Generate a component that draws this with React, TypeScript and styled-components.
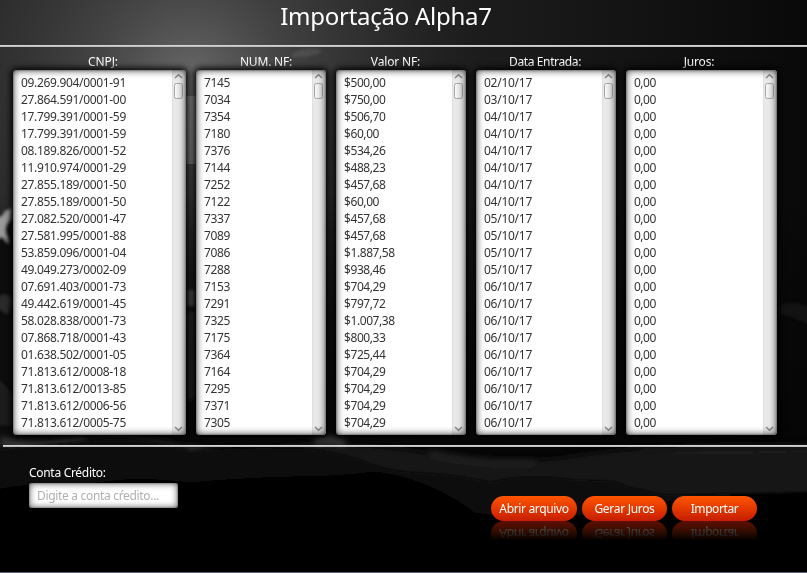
import React from "react";
import styled, { createGlobalStyle, css } from "styled-components";

const GlobalStyle = createGlobalStyle`
  * { box-sizing: border-box; }
  body { margin: 0; background: #000; overflow: hidden; }
`;

const Window = styled.main`
  position: relative;
  width: 807px;
  height: 573px;
  overflow: hidden;
  display: flex;
  flex-direction: column;
  border-bottom: 1px solid #56627a;
  font: 12px/17px "Noto Sans", "Open Sans", sans-serif;
  color: #fff;
  isolation: isolate;
`;

const Scenery = styled.svg`
  position: absolute;
  inset: 0;
  z-index: -1;
`;

const Title = styled.h1`
  margin: 0;
  height: 45px;
  padding-right: 35px;
  font-size: 24px;
  font-weight: 400;
  line-height: 31px;
  letter-spacing: -0.26px;
  text-align: center;
`;

const Rule = styled.hr<{ $inset?: number }>`
  flex: none;
  height: 2px;
  width: auto;
  margin: 0 0 0 ${(p) => p.$inset ?? 0}px;
  border: 0;
  background: linear-gradient(#d4d4d4 50%, #bcbcbc 50%);
`;

const Columns = styled.section`
  display: flex;
  gap: 10px;
  height: 398px;
  padding: 7px 0 0 13px;
`;

const Column = styled.div<{ $width: number }>`
  width: ${(p) => p.$width}px;
`;

const ColumnLabel = styled.div<{ $shift: number; $spacing: number }>`
  height: 16px;
  line-height: 16px;
  text-align: center;
  text-indent: ${(p) => p.$shift * 2}px;
  letter-spacing: ${(p) => p.$spacing}px;
  white-space: nowrap;
`;

const fieldShade = css`
  content: "";
  position: absolute;
  inset: 0;
  border-radius: 4px;
  pointer-events: none;
`;

const ListBox = styled.div`
  position: relative;
  display: flex;
  justify-content: space-between;
  height: 365px;
  border-radius: 4px;
  background: #fff;
  color: #333;
  box-shadow: 0 0 6px 2px #000;
  &::after {
    ${fieldShade}
    box-shadow: inset 0 0 2px #333, inset 0 0 7px 1px rgba(0, 0, 0, 0.62);
  }
`;

const Rows = styled.ul<{ $spacing: number }>`
  margin: 0;
  padding: 4px 0 0 8px;
  list-style: none;
  letter-spacing: ${(p) => p.$spacing}px;
  white-space: nowrap;
`;

const ScrollTrack = styled.div`
  display: flex;
  flex-direction: column;
  align-items: center;
  width: 14px;
  padding: 3px 2px 3px 0;
  border-radius: 0 4px 4px 0;
  background: #e9e9e9;
  border-left: 1px solid #e0e0e0;
`;

const Thumb = styled.div`
  width: 9px;
  height: 16px;
  margin: 3px 0 auto;
  border: 1px solid #a5a5a5;
  border-radius: 2.5px;
  background: linear-gradient(90deg, #fafafa, #dadada);
`;

const Arrow = styled.svg<{ $down?: boolean }>`
  display: block;
  flex: none;
  transform: ${(p) => (p.$down ? "scaleY(-1)" : "none")};
`;

const Footer = styled.footer`
  display: flex;
  justify-content: space-between;
  padding: 17px 50px 0 29px;
`;

const AccountLabel = styled.label`
  display: block;
  letter-spacing: -0.3px;
`;

const Field = styled.div`
  position: relative;
  width: 149px;
  height: 25px;
  margin-top: 2px;
  &::after {
    ${fieldShade}
    border-radius: 3px;
    box-shadow: inset 0 0 2px #444, inset 0 0 6px 1px rgba(0, 0, 0, 0.55);
  }
`;

const AccountInput = styled.input`
  display: block;
  width: 100%;
  height: 100%;
  padding: 0 8px;
  border: 0;
  border-radius: 3px;
  outline: none;
  background: #fff;
  font: inherit;
  letter-spacing: -0.32px;
  &::placeholder { color: #b0b0b0; opacity: 1; }
`;

const Actions = styled.div`
  display: flex;
  gap: 5px;
  padding-top: 32px;
`;

const ActionButton = styled.button<{ $width: number; $spacing: number }>`
  width: ${(p) => p.$width}px;
  height: 25px;
  padding: 0 0 1px;
  border: 0;
  border-radius: 13px;
  background: linear-gradient(#ff5500, #c61d00);
  color: #fff;
  font: inherit;
  letter-spacing: ${(p) => p.$spacing}px;
  white-space: nowrap;
  -webkit-box-reflect: below 0 linear-gradient(transparent 22%, rgba(0, 0, 0, 0.48));
`;

interface ColumnData {
  label: string;
  width: number;
  shift: number;
  spacing: number;
  rowSpacing: number;
  rows: string[];
}

const columns: ColumnData[] = [
  {
    label: "CNPJ:", width: 173, shift: 3.5, spacing: -0.1, rowSpacing: -0.33,
    rows: [
      "09.269.904/0001-91", "27.864.591/0001-00", "17.799.391/0001-59", "17.799.391/0001-59",
      "08.189.826/0001-52", "11.910.974/0001-29", "27.855.189/0001-50", "27.855.189/0001-50",
      "27.082.520/0001-47", "27.581.995/0001-88", "53.859.096/0001-04", "49.049.273/0002-09",
      "07.691.403/0001-73", "49.442.619/0001-45", "58.028.838/0001-73", "07.868.718/0001-43",
      "01.638.502/0001-05", "71.813.612/0008-18", "71.813.612/0013-85", "71.813.612/0006-56",
      "71.813.612/0005-75",
    ],
  },
  {
    label: "NUM. NF:", width: 130, shift: 5, spacing: -0.2, rowSpacing: -0.4,
    rows: [
      "7145", "7034", "7354", "7180", "7376", "7144", "7252", "7122", "7337", "7089", "7086",
      "7288", "7153", "7291", "7325", "7175", "7364", "7164", "7295", "7371", "7305",
    ],
  },
  {
    label: "Valor NF:", width: 130, shift: -5.5, spacing: -0.15, rowSpacing: -0.42,
    rows: [
      "$500,00", "$750,00", "$506,70", "$60,00", "$534,26", "$488,23", "$457,68", "$60,00",
      "$457,68", "$457,68", "$1.887,58", "$938,46", "$704,29", "$797,72", "$1.007,38",
      "$800,33", "$725,44", "$704,29", "$704,29", "$704,29", "$704,29",
    ],
  },
  {
    label: "Data Entrada:", width: 140, shift: -1, spacing: -0.38, rowSpacing: -0.26,
    rows: [
      "02/10/17", "03/10/17", ...Array(6).fill("04/10/17"), ...Array(4).fill("05/10/17"),
      ...Array(9).fill("06/10/17"),
    ],
  },
  {
    label: "Juros:", width: 151, shift: -2.5, spacing: -0.2, rowSpacing: -0.5,
    rows: Array(21).fill("0,00"),
  },
];

function Background() {
  return (
    <Scenery width="807" height="573" viewBox="0 0 807 573" aria-hidden="true">
      <defs>
        <linearGradient id="sky" x2="1">
          <stop offset="0" stopColor="#262626" />
          <stop offset=".45" stopColor="#232323" />
          <stop offset="1" stopColor="#090909" />
        </linearGradient>
        <radialGradient id="glow" gradientUnits="userSpaceOnUse" cx="190" cy="80" r="290">
          <stop offset="0" stopColor="#999" stopOpacity=".58" />
          <stop offset=".3" stopColor="#888" stopOpacity=".34" />
          <stop offset=".62" stopColor="#606060" stopOpacity=".2" />
          <stop offset="1" stopColor="#333" stopOpacity="0" />
        </radialGradient>
        <linearGradient id="dusk" x2="0" y2="1">
          <stop offset=".34" stopColor="#030303" stopOpacity="0" />
          <stop offset=".6" stopColor="#070707" stopOpacity=".78" />
          <stop offset="1" stopColor="#000" />
        </linearGradient>
        <filter id="soft" x="-20%" y="-100%" width="140%" height="300%">
          <feGaussianBlur stdDeviation="3" />
        </filter>
        <filter id="cloud" x="-100%" y="-30%" width="300%" height="160%">
          <feGaussianBlur stdDeviation="1.6" />
        </filter>
        <filter id="ridge" x="-5%" y="-10%" width="110%" height="120%">
          <feGaussianBlur stdDeviation="0.8" />
        </filter>
      </defs>
      <rect width="807" height="573" fill="url(#sky)" />
      <rect width="807" height="573" fill="url(#glow)" />
      <rect width="807" height="573" fill="url(#dusk)" />
      <rect x="180" y="96" width="22" height="68" fill="#bbb" opacity=".42" />
      <g filter="url(#cloud)">
        <path d="M-6 232 Q4 225 16 215 V440 H-6Z" fill="#080808" />
        <path d="M-4 218 L2 216 5 211 12 208 11 218 6 225 5 231 9 244 3 237 -4 238Z" fill="#999" />
        <path d="M-2 298 Q6 290 12 300 L8 315 -2 308Z" fill="#444" opacity=".6" />
        <path d="M-2 380 Q6 385 12 395 V425 H-2Z" fill="#333" opacity=".5" />
        <path d="M292 54 Q303 46 322 50 Q318 58 292 57Z" fill="#888" opacity=".22" />
        <path d="M187 290 H195 V306 H187Z" fill="#777" opacity=".5" />
        <path d="M187 312 H195 V400 H187Z" fill="#444" opacity=".4" />
        <path d="M780 305 Q792 300 812 308 V326 Q794 316 780 314Z" fill="#333" opacity=".3" />
      </g>
      <g filter="url(#soft)">
        <path d="M0 438 Q40 446 90 440 Q130 430 175 443 Q230 458 290 446 V462 H0Z" fill="#1b1b1b" />
        <path d="M0 440 Q35 449 85 440" fill="none" stroke="#4a4a4a" strokeWidth="4" />
        <path d="M188 448 Q230 460 258 454" fill="none" stroke="#383838" strokeWidth="4" />
        <path d="M315 441 Q330 437 345 443" fill="none" stroke="#484848" strokeWidth="5" />
        <path d="M280 446 Q345 440 420 452 Q510 468 580 455 Q690 440 830 446 V500 H480Z" fill="#151515" />
        <path d="M430 453 Q480 465 535 462" fill="none" stroke="#2b2b2b" strokeWidth="4" />
        <path d="M640 450 Q700 456 830 449" fill="none" stroke="#1e1e1e" strokeWidth="5" />
      </g>
      <g filter="url(#ridge)">
        <path d="M-10 450 Q70 442 115 438 Q150 440 190 451 Q240 465 290 468 V510 H-10Z" fill="#070707" />
        <path d="M190 451 Q260 446 310 449 Q335 452 358 459 Q385 471 410 472 Q455 474 490 482 Q530 473 575 480 Q620 479 625 486 L665 495 820 492 V573 H190Z" fill="#070707" />
        <path d="M-10 491 Q40 481 83 485 Q135 475 190 483 Q245 478 290 477 Q335 477 375 472 Q420 477 465 506 Q490 521 518 580 H-10Z" fill="#010101" />
        <path d="M460 510 Q540 528 620 508 Q710 495 820 491 V580 H480Z" fill="#020202" />
      </g>
    </Scenery>
  );
}

function ArrowIcon({ down }: { down?: boolean }) {
  return (
    <Arrow $down={down} width="9" height="7" viewBox="0 0 9 7" aria-hidden="true">
      <path d="M1 5 4.5 1.8 8 5" fill="none" stroke="#888" strokeWidth="1.5" />
    </Arrow>
  );
}

export default function App() {
  return (
    <>
      <GlobalStyle />
      <Window>
        <Background />
        <Title>Importação Alpha7</Title>
        <Rule />
        <Columns>
          {columns.map((c) => (
            <Column key={c.label} $width={c.width}>
              <ColumnLabel $shift={c.shift} $spacing={c.spacing}>{c.label}</ColumnLabel>
              <ListBox>
                <Rows $spacing={c.rowSpacing}>
                  {c.rows.map((row, i) => <li key={i}>{row}</li>)}
                </Rows>
                <ScrollTrack>
                  <ArrowIcon />
                  <Thumb />
                  <ArrowIcon down />
                </ScrollTrack>
              </ListBox>
            </Column>
          ))}
        </Columns>
        <Rule $inset={3} />
        <Footer>
          <div>
            <AccountLabel htmlFor="account">Conta Crédito:</AccountLabel>
            <Field>
              <AccountInput id="account" placeholder="Digite a conta cŕedito..." />
            </Field>
          </div>
          <Actions>
            <ActionButton $width={86} $spacing={-0.35}>Abrir arquivo</ActionButton>
            <ActionButton $width={85} $spacing={-0.3}>Gerar Juros</ActionButton>
            <ActionButton $width={85} $spacing={-0.4}>Importar</ActionButton>
          </Actions>
        </Footer>
      </Window>
    </>
  );
}
